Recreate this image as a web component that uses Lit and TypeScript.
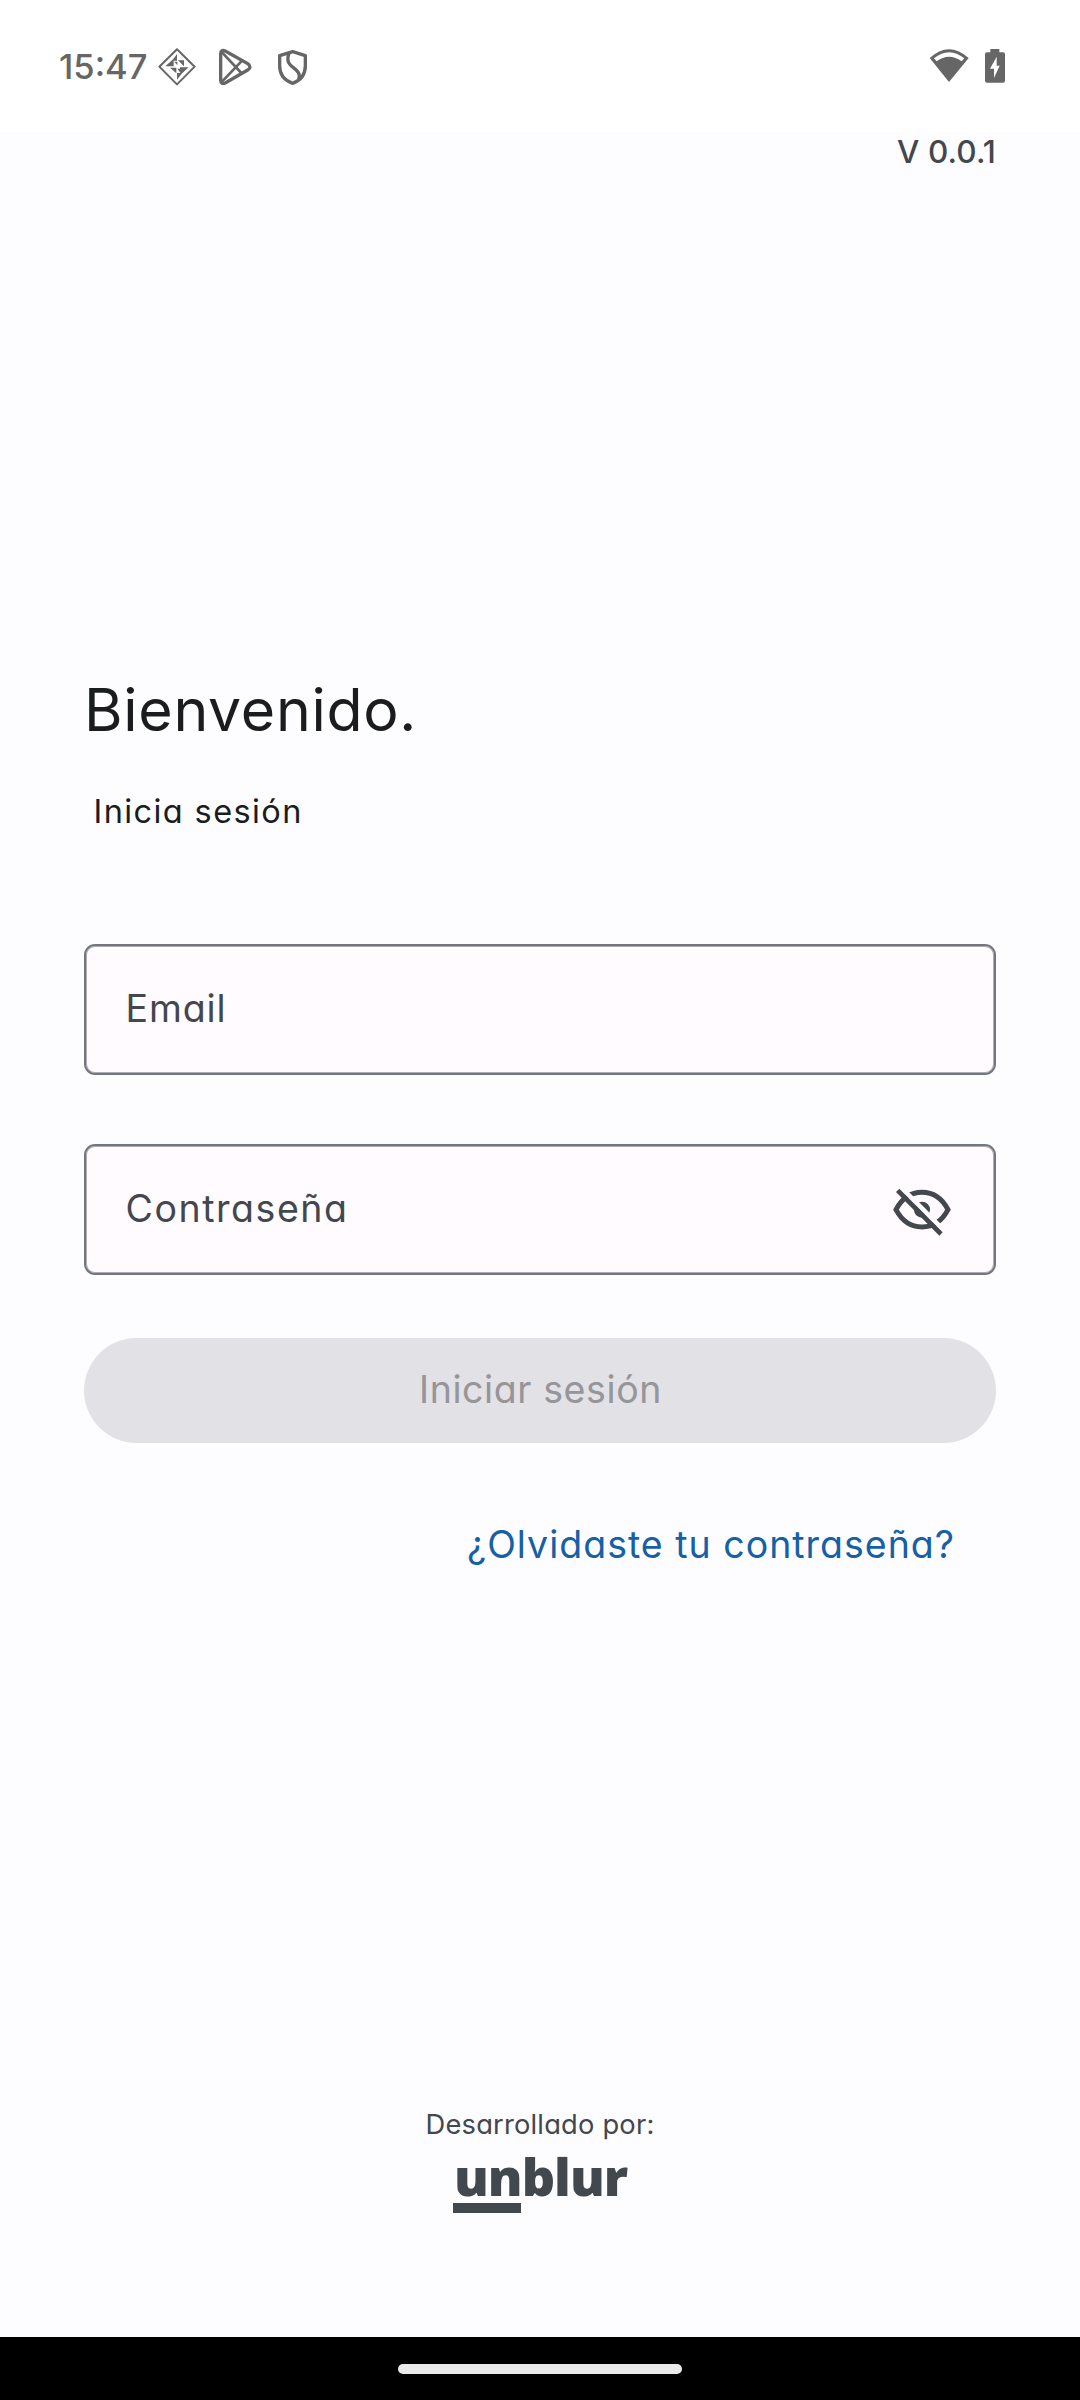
import { LitElement, html, css } from "lit";
import { customElement, property } from "lit/decorators.js";

@customElement("status-bar")
class StatusBar extends LitElement {
  static styles = css`
    :host {
      display: flex;
      align-items: center;
      box-sizing: border-box;
      height: 132px;
      padding: 2px 75px 0 59px;
      background: #ffffff;
      color: #666666;
    }
    .time {
      width: 98px;
      font-size: 34.5px;
      font-weight: 500;
      line-height: 130px;
      white-space: nowrap;
    }
    svg { display: block; flex: none; height: 38px; }
    .notif { width: 40px; }
    .left { display: flex; gap: 17.700px; flex: 1; }
    .right { display: flex; gap: 15.700px; }
    .wifi { width: 40px; }
    .battery { width: 20px; }
  `;
  render() {
    return html`
      <span class="time">15:47</span>
      <div class="left">
        <svg class="notif" viewBox="351 54 120 114" fill="none" stroke="#666">
          <path stroke-width="6" stroke-linejoin="round" d="M411 58 464 110 411 163 358 110Z" />
          <g fill="#666" stroke="none">
            <path d="M401 86V109H376Z M411 72V92H396Z M414 91H432V109Z M390 113H409V130Z M420 112H446L420 136Z M411 129H427L411 149Z M403 95H412V106Z M412 116H420V127Z" />
          </g>
        </svg>
        <svg class="notif" viewBox="524 54 120 114" fill="none" stroke="#666" stroke-width="10">
          <path d="M541 72Q541 56 556 64L622 101Q636 111 622 120L556 158Q541 165 541 150Z" />
          <path stroke-width="8" d="M545 67 606 132M545 155 606 91" />
        </svg>
        <svg class="notif" viewBox="698 54 120 114" fill="none" stroke="#666" stroke-width="10">
          <path stroke-linejoin="round" d="M760 65 798 77V108Q798 146 760 160Q721 146 721 108V77Z" />
          <path d="M749 70C740 94 750 104 762 113S785 131 778 149" />
        </svg>
      </div>
      <div class="right">
        <svg class="wifi" viewBox="208 54 120 114">
          <path fill="#666" d="M268 156 210 84Q268 31 327 84Z" />
          <path fill="#fff" d="M223 85Q268 48 314 85L306 94Q268 67 231 94Z" />
        </svg>
        <svg class="battery" viewBox="375 54 60 114">
          <path fill="#666" d="M391 57H418V67H429Q435 67 435 73V152Q435 158 429 158H381Q375 158 375 152V73Q375 67 381 67H391Z" />
          <path fill="#fff" d="M410 80 390 116H402V144L419 107H410Z" />
        </svg>
      </div>
    `;
  }
}

@customElement("outlined-field")
class OutlinedField extends LitElement {
  @property() label = "";
  @property({ type: Boolean }) secret = false;
  static styles = css`
    :host {
      display: flex;
      align-items: center;
      justify-content: space-between;
      box-sizing: border-box;
      height: 131px;
      padding: 0 41.800px 0 39.500px;
      border: 2px solid #73777f;
      border-radius: 11px;
      box-shadow: inset 0 0 0 1px rgb(115 119 127 / 0.6);
      background: #fffbff;
      color: #43474e;
      font-size: 37.500px;
    }
    span { padding-bottom: 2px; }
    .email { letter-spacing: 0.900px; }
    .secret { letter-spacing: 1.550px; }
    svg { display: block; width: 60px; height: 50px; margin-top: 4px; }
  `;
  render() {
    return html`
      <span class=${this.secret ? "secret" : "email"}>${this.label}</span>
      ${this.secret
        ? html`<svg viewBox="98 170 180 150" fill="none" stroke="#43474e" stroke-width="15">
            <mask id="cut" maskUnits="userSpaceOnUse" x="98" y="170" width="180" height="150">
              <rect x="98" y="170" width="180" height="150" fill="#fff" stroke="none" />
              <path stroke="#000" stroke-width="14" d="M114.500 160.500 274.500 321.500" />
            </mask>
            <g mask="url(#cut)">
              <path d="M110 238C128 204 156 186 188 186S248 204 266 238C248 272 220 290 188 290S128 272 110 238Z" />
              <circle cx="188" cy="238" r="24" fill="#43474e" stroke="none" />
            </g>
            <path stroke-width="14" d="M115 180 245 311" />
          </svg>`
        : null}
    `;
  }
}

@customElement("app-root")
class AppRoot extends LitElement {
  static styles = css`
    :host {
      display: flex;
      flex-direction: column;
      width: 1080px;
      height: 2400px;
      overflow: hidden;
      background: #fdfdff;
      color: #1a1c1e;
      font-family: Inter, "Liberation Sans", sans-serif;
      font-feature-settings: "cv11";
    }
    main {
      display: flex;
      flex-direction: column;
      flex: 1;
      padding: 0 84px;
      white-space: nowrap;
    }
    .version {
      align-self: flex-end;
      font-size: 31.500px;
      font-weight: 500;
      line-height: 39px;
      letter-spacing: 0.100px;
      color: #43474e;
    }
    h1 {
      margin: 496px 0 36px;
      font-size: 59px;
      font-weight: 400;
      line-height: 85px;
      letter-spacing: 0.700px;
    }
    .subtitle {
      padding-left: 9.500px;
      margin-bottom: 108px;
      font-size: 32.500px;
      line-height: 48px;
      letter-spacing: 1.400px;
    }
    .fields { display: flex; flex-direction: column; gap: 69px; }
    .submit {
      margin: 63px 0 75px;
      height: 105px;
      padding: 0 0 2px 1px;
      border: 0;
      border-radius: 53px;
      background: #e2e1e5;
      color: #95959a;
      font: inherit;
      font-feature-settings: inherit;
      font-size: 37.500px;
      letter-spacing: 0.600px;
    }
    .forgot {
      align-self: flex-end;
      margin-right: 41px;
      font-size: 37.500px;
      line-height: 54px;
      letter-spacing: 1px;
      color: #1660a5;
    }
    .credit {
      display: flex;
      flex-direction: column;
      align-items: center;
      margin-top: 533px;
      color: #43474e;
    }
    .by { font-size: 27.300px; line-height: 40px; letter-spacing: 0.200px; }
    .logo {
      width: 174px;
      padding-top: 1px;
      font-family: "Open Sans", "Noto Sans", sans-serif;
      font-size: 52px;
      font-weight: 800;
      line-height: 60px;
      letter-spacing: -1px;
      text-indent: 1px;
    }
    .bar { width: 68px; height: 9.500px; margin-top: -3px; background: #43474e; }
    .nav {
      display: flex;
      justify-content: center;
      align-items: center;
      height: 63px;
      background: #000;
    }
    .pill { width: 284px; height: 10px; border-radius: 5px; background: #eaeaea; }
  `;
  render() {
    return html`
      <status-bar></status-bar>
      <main>
        <div class="version">V 0.0.1</div>
        <h1>Bienvenido.</h1>
        <div class="subtitle">Inicia sesión</div>
        <div class="fields">
          <outlined-field label="Email"></outlined-field>
          <outlined-field label="Contraseña" secret></outlined-field>
        </div>
        <button class="submit" disabled>Iniciar sesión</button>
        <div class="forgot">¿Olvidaste tu contraseña?</div>
        <div class="credit">
          <div class="by">Desarrollado por:</div>
          <div class="logo">unblur<div class="bar"></div></div>
        </div>
      </main>
      <div class="nav"><div class="pill"></div></div>
    `;
  }
}
